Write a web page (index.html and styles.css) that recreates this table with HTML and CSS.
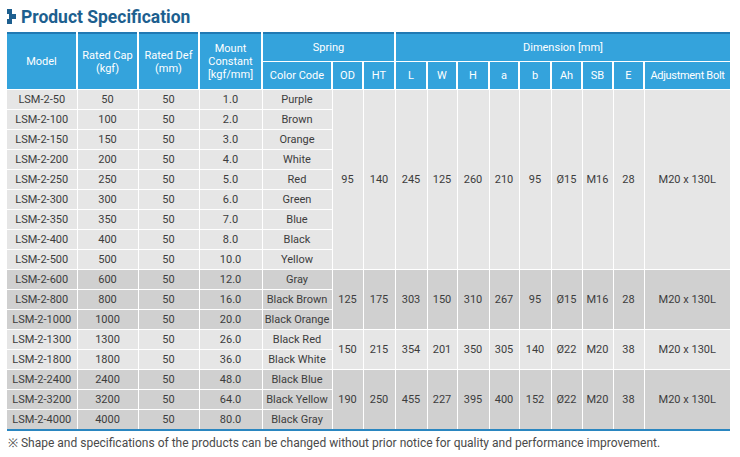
FILE: index.html
```html
<!DOCTYPE html>
<html>
<head>
<meta charset="utf-8">
<link rel="stylesheet" href="styles.css">
</head>
<body>
<div class="page">
  <h1 class="title">
    <svg class="title-icon" width="9" height="15" viewBox="0 0 9 15">
      <path d="M0 0H5V5H9V10H5V15H0V10H2V5H0Z" fill="#1d5f8f"/>
    </svg>
    <span class="title-text">Product Specification</span>
  </h1>
  <table class="spec">
    <colgroup>
      <col style="width:70px"><col style="width:61px"><col style="width:61px"><col style="width:63px">
      <col style="width:70px"><col style="width:31px"><col style="width:32px">
      <col style="width:32px"><col style="width:30px"><col style="width:32px"><col style="width:30px">
      <col style="width:32px"><col style="width:31px"><col style="width:31px"><col style="width:31px">
      <col style="width:86px">
    </colgroup>
    <thead>
      <tr class="h1">
        <th rowspan="2">Model</th>
        <th rowspan="2">Rated Cap<br>(kgf)</th>
        <th rowspan="2">Rated Def<br>(mm)</th>
        <th rowspan="2" class="mount">Mount<br>Constant<br>[kgf/mm]</th>
        <th colspan="3">Spring</th>
        <th colspan="9">Dimension [mm]</th>
      </tr>
      <tr class="h2">
        <th>Color Code</th><th>OD</th><th>HT</th>
        <th>L</th><th>W</th><th>H</th><th>a</th><th>b</th><th>Ah</th><th>SB</th><th>E</th><th class="adj">Adjustment Bolt</th>
      </tr>
    </thead>
    <tbody class="g-light">
      <tr><td>LSM-2-50</td><td>50</td><td>50</td><td>1.0</td><td>Purple</td>
        <td rowspan="9">95</td><td rowspan="9">140</td><td rowspan="9">245</td><td rowspan="9">125</td><td rowspan="9">260</td><td rowspan="9">210</td><td rowspan="9">95</td><td rowspan="9">Ø15</td><td rowspan="9">M16</td><td rowspan="9">28</td><td rowspan="9">M20 x 130L</td></tr>
      <tr><td>LSM-2-100</td><td>100</td><td>50</td><td>2.0</td><td>Brown</td></tr>
      <tr><td>LSM-2-150</td><td>150</td><td>50</td><td>3.0</td><td>Orange</td></tr>
      <tr><td>LSM-2-200</td><td>200</td><td>50</td><td>4.0</td><td>White</td></tr>
      <tr><td>LSM-2-250</td><td>250</td><td>50</td><td>5.0</td><td>Red</td></tr>
      <tr><td>LSM-2-300</td><td>300</td><td>50</td><td>6.0</td><td>Green</td></tr>
      <tr><td>LSM-2-350</td><td>350</td><td>50</td><td>7.0</td><td>Blue</td></tr>
      <tr><td>LSM-2-400</td><td>400</td><td>50</td><td>8.0</td><td>Black</td></tr>
      <tr><td>LSM-2-500</td><td>500</td><td>50</td><td>10.0</td><td>Yellow</td></tr>
    </tbody>
    <tbody class="g-dark">
      <tr><td>LSM-2-600</td><td>600</td><td>50</td><td>12.0</td><td>Gray</td>
        <td rowspan="3">125</td><td rowspan="3">175</td><td rowspan="3">303</td><td rowspan="3">150</td><td rowspan="3">310</td><td rowspan="3">267</td><td rowspan="3">95</td><td rowspan="3">Ø15</td><td rowspan="3">M16</td><td rowspan="3">28</td><td rowspan="3">M20 x 130L</td></tr>
      <tr><td>LSM-2-800</td><td>800</td><td>50</td><td>16.0</td><td>Black Brown</td></tr>
      <tr><td>LSM-2-1000</td><td>1000</td><td>50</td><td>20.0</td><td>Black Orange</td></tr>
    </tbody>
    <tbody class="g-light">
      <tr><td>LSM-2-1300</td><td>1300</td><td>50</td><td>26.0</td><td>Black Red</td>
        <td rowspan="2">150</td><td rowspan="2">215</td><td rowspan="2">354</td><td rowspan="2">201</td><td rowspan="2">350</td><td rowspan="2">305</td><td rowspan="2">140</td><td rowspan="2">Ø22</td><td rowspan="2">M20</td><td rowspan="2">38</td><td rowspan="2">M20 x 130L</td></tr>
      <tr><td>LSM-2-1800</td><td>1800</td><td>50</td><td>36.0</td><td>Black White</td></tr>
    </tbody>
    <tbody class="g-dark last">
      <tr><td>LSM-2-2400</td><td>2400</td><td>50</td><td>48.0</td><td>Black Blue</td>
        <td rowspan="3">190</td><td rowspan="3">250</td><td rowspan="3">455</td><td rowspan="3">227</td><td rowspan="3">395</td><td rowspan="3">400</td><td rowspan="3">152</td><td rowspan="3">Ø22</td><td rowspan="3">M20</td><td rowspan="3">38</td><td rowspan="3">M20 x 130L</td></tr>
      <tr><td>LSM-2-3200</td><td>3200</td><td>50</td><td>64.0</td><td>Black Yellow</td></tr>
      <tr><td>LSM-2-4000</td><td>4000</td><td>50</td><td>80.0</td><td>Black Gray</td></tr>
    </tbody>
  </table>
  <p class="note">※ Shape and specifications of the products can be changed without prior notice for quality and performance improvement.</p>
</div>
</body>
</html>
```
FILE: styles.css
```css
html, body {
  margin: 0;
  padding: 0;
  background: #fff;
}
.page {
  padding: 0 10px 0 7px;
  font-family: Roboto, "Liberation Sans", sans-serif;
}
.title {
  margin: 0;
  height: 32px;
  display: flex;
  align-items: center;
  gap: 5px;
  color: #1d5f8f;
}
.title-icon {
  flex: none;
  margin-top: 1px;
}
.title-text {
  display: inline-block;
  font-family: Roboto, "Liberation Sans", sans-serif;
  font-weight: 700;
  font-size: 19px;
  transform: scaleX(0.92);
  transform-origin: left center;
  white-space: nowrap;
}
.spec {
  border-collapse: collapse;
  table-layout: fixed;
  width: 723px;
  font-size: 11px;
  color: #3d3d3d;
  text-align: center;
  border-top: 2px solid #2079b3;
  border-bottom: 2px solid #2a86c0;
}
.spec th {
  background: #34a3dc;
  color: #fff;
  font-weight: 400;
  font-size: 11px;
  line-height: 13px;
  padding: 0;
  border-left: 2px solid #fff;
  border-right: 2px solid #fff;
  border-bottom: 1px solid #fff;
}
.spec th:first-child { border-left: 0; }
.spec tr.h1 th[rowspan] { border-bottom: 0; }
.spec .h1 th { height: 27px; }
.spec .h2 th { height: 27px; }
.spec .h2 th:last-child { border-right: 0; }
.spec .h1 th:last-child { border-right: 0; }
.spec .adj { letter-spacing: -0.3px; }
.spec td {
  height: 19px;
  padding: 0;
  border: 1px solid #fff;
  white-space: nowrap;
  line-height: 19px;
}
.spec td:first-child { border-left: 0; }
.spec tr > td:last-child[rowspan] { border-right: 0; }
.g-light td { background: #e6e6e6; }
.g-dark td { background: #d0d0d0; }
.note {
  margin: 3px 0 0 1px;
  font-size: 12px;
  color: #4a4a4a;
}
```
